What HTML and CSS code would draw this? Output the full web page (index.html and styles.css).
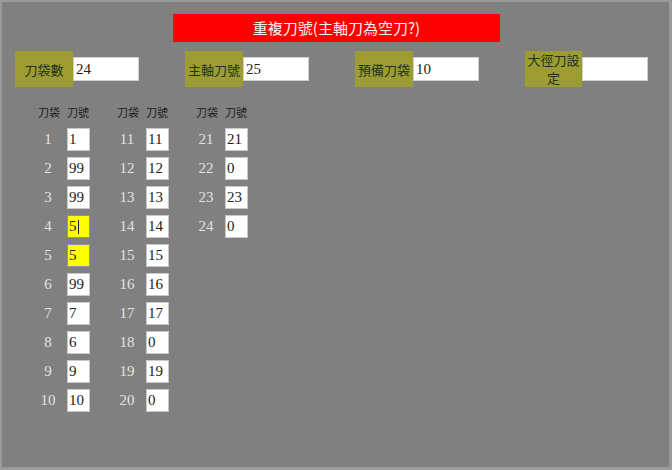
FILE: index.html
```html
<!DOCTYPE html>
<html>
<head>
<meta charset="utf-8">
<link rel="stylesheet" href="styles.css">
</head>
<body>
<div class="screen">
  <div class="banner">重複刀號(主軸刀為空刀?)</div>
  <div class="fields">
    <div class="field"><div class="label">刀袋數</div><div class="box">24</div></div>
    <div class="field"><div class="label">主軸刀號</div><div class="box">25</div></div>
    <div class="field"><div class="label">預備刀袋</div><div class="box">10</div></div>
    <div class="field"><div class="label two"><span class="ln">大徑刀設</span><span class="ln">定</span></div><div class="box"></div></div>
  </div>
  <div class="table">
    <div class="group">
      <div class="head">刀袋</div><div class="head h2">刀號</div>
      <div class="num">1</div><div class="cell">1</div>
      <div class="num">2</div><div class="cell">99</div>
      <div class="num">3</div><div class="cell">99</div>
      <div class="num">4</div><div class="cell warn">5<span class="caret"></span></div>
      <div class="num">5</div><div class="cell warn">5</div>
      <div class="num">6</div><div class="cell">99</div>
      <div class="num">7</div><div class="cell">7</div>
      <div class="num">8</div><div class="cell">6</div>
      <div class="num">9</div><div class="cell">9</div>
      <div class="num">10</div><div class="cell">10</div>
    </div>
    <div class="group">
      <div class="head">刀袋</div><div class="head h2">刀號</div>
      <div class="num">11</div><div class="cell">11</div>
      <div class="num">12</div><div class="cell">12</div>
      <div class="num">13</div><div class="cell">13</div>
      <div class="num">14</div><div class="cell">14</div>
      <div class="num">15</div><div class="cell">15</div>
      <div class="num">16</div><div class="cell">16</div>
      <div class="num">17</div><div class="cell">17</div>
      <div class="num">18</div><div class="cell">0</div>
      <div class="num">19</div><div class="cell">19</div>
      <div class="num">20</div><div class="cell">0</div>
    </div>
    <div class="group">
      <div class="head">刀袋</div><div class="head h2">刀號</div>
      <div class="num">21</div><div class="cell">21</div>
      <div class="num">22</div><div class="cell">0</div>
      <div class="num">23</div><div class="cell">23</div>
      <div class="num">24</div><div class="cell">0</div>
    </div>
  </div>
</div>
</body>
</html>
```
FILE: styles.css
```css
html, body {
  margin: 0;
  padding: 0;
  background: #808080;
}
.screen {
  width: 672px;
  height: 470px;
  box-sizing: border-box;
  background: #808080;
  border-top: 2px solid #9a9a9a;
  border-left: 2px solid #9a9a9a;
  border-right: 3px solid #9a9a9a;
  border-bottom: 3px solid #9a9a9a;
  padding-top: 12px;
  font-family: "Noto Sans CJK TC", "Noto Sans", sans-serif;
  overflow: hidden;
}
.banner {
  margin-left: 171px;
  width: 327px;
  height: 28px;
  line-height: 28px;
  background: #ff0000;
  color: #f4f4f4;
  text-align: center;
  font-size: 15px;
}
.fields {
  margin-top: 9px;
  padding-left: 13px;
  display: flex;
  gap: 46px;
}
.field {
  display: flex;
  align-items: center;
}
.label {
  width: 58px;
  height: 36px;
  background: #9c9c32;
  color: #1e341e;
  font-size: 13px;
  display: flex;
  align-items: center;
  justify-content: center;
  text-align: center;
  line-height: 17px;
  white-space: nowrap;
}
.label.two {
  width: 57px;
  flex-direction: column;
  line-height: 18px;
}
.ln {
  display: block;
  height: 18px;
  overflow: hidden;
}
.box {
  width: 66px;
  height: 24px;
  box-sizing: border-box;
  background: #ffffff;
  border: 1px solid #d0d0d0;
  font-family: "Liberation Serif", serif;
  font-size: 15px;
  line-height: 22px;
  padding-left: 2px;
  color: #222;
}
.table {
  margin-top: 19px;
  padding-left: 36px;
  display: flex;
  gap: 27px;
  align-items: flex-start;
}
.group {
  display: grid;
  grid-template-columns: 20px 23px;
  column-gap: 9px;
  row-gap: 6px;
  grid-auto-rows: 23px;
  grid-template-rows: 16px;
}
.head {
  font-size: 11px;
  line-height: 12px;
  color: #1c1c1c;
  white-space: nowrap;
}
.num {
  font-family: "Liberation Serif", serif;
  font-size: 15px;
  color: #e2e2e2;
  text-align: center;
  line-height: 23px;
  white-space: nowrap;
}
.cell {
  box-sizing: border-box;
  background: #ffffff;
  border: 1px solid #c8c8c8;
  font-family: "Liberation Serif", serif;
  font-size: 15px;
  line-height: 21px;
  padding-left: 1px;
  color: #222;
  display: flex;
  align-items: center;
}
.cell.warn {
  background: #ffff00;
  border-color: #8a94a8;
}
.caret {
  display: inline-block;
  width: 1px;
  height: 14px;
  background: #222;
  margin-left: 1px;
}
```
